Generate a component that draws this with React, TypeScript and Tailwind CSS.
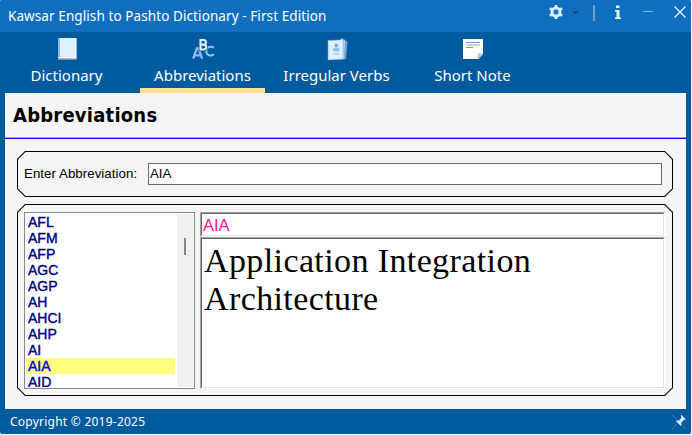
import type { ReactNode } from 'react';

const uiFont = "font-['Noto_Sans','Open_Sans',sans-serif]";

const abbreviations = ['AFL', 'AFM', 'AFP', 'AGC', 'AGP', 'AH', 'AHCI', 'AHP', 'AI', 'AIA', 'AID'];

function BookIcon() {
  return (
    <svg width="24" height="24" viewBox="0 0 24 24" className="ml-px block">
      <path d="M3 2h18.500v21.500H3z" fill="#8fb8e8" />
      <path d="M5 2h16.500v19H5z" fill="#dff0ff" />
      <path d="M3.500 21h18v1.200H4z" fill="#fff" />
      <path d="M3.500 22.200h18v1h-18z" fill="#9fb7d0" />
    </svg>
  );
}

function LettersIcon() {
  return (
    <svg width="24" height="24" viewBox="0 0 24 24" className="ml-px block" fill="none">
      <path d="M2.200 22.700 5.800 12.500h1.800l3.600 10.200M3.800 19.300h6" stroke="#85bdf5" strokeWidth="2.300" />
      <path d="M22.800 11.800c-1.600-1.500-5.800-1.500-6.900.8-.8 1.900-.6 4.700.9 6 1.800 1.200 4.500.9 6-.4" stroke="#93c5f7" strokeWidth="2" />
      <path d="M9.500 4v9.500h3.200c3.400 0 3.400-4.900.2-4.900 2.900-.2 2.700-4.600-.5-4.600zM9.500 8.600H13" stroke="#005a9e" strokeWidth="3.600" />
      <path d="M9.500 4v9.500h3.200c3.400 0 3.400-4.900.2-4.900 2.900-.2 2.700-4.600-.5-4.600zM9.500 8.600H13" stroke="#dff0ff" strokeWidth="2.100" />
    </svg>
  );
}

function AlbumIcon() {
  return (
    <svg width="24" height="24" viewBox="0 0 24 24" className="ml-px block">
      <path d="m18 4.500 4.500 1L21 23l-5 .8z" fill="#76aee5" />
      <path d="m16 3 4.700 1L19.500 23l-4 .8z" fill="#a9d2f7" stroke="#367fbd" strokeWidth=".5" />
      <path d="m3 4.500 11.500-.5L18 2.500l.2 20-3.700 1L3 24z" fill="#dff0ff" stroke="#7ba9d8" strokeWidth=".6" />
      <path d="M3 4.500h1.300V24H3z" fill="#b8dcfc" />
      <circle cx="11.300" cy="9.300" r="1.900" fill="#72afe8" />
      <path d="M8 15.500V13c0-2 6.500-2 6.500 0v2.500zM8.500 17.500h5.800v1H8.500z" fill="#8fc2f0" />
    </svg>
  );
}

function NoteIcon() {
  return (
    <svg width="24" height="24" viewBox="0 0 24 24" className="ml-px block">
      <path d="M2 3h20v15L17.500 23H2z" fill="#fff" />
      <path d="M17.500 23v-5H22z" fill="#b5d4ef" stroke="#78a7d2" strokeWidth=".7" />
      <path d="M5 6.500h14M5 11.500h7" stroke="#6b9fd6" />
      <path d="M5 9h14" stroke="#b5c9e8" strokeWidth="1.500" />
    </svg>
  );
}

function Tab({ icon, label, className, active }: { icon: ReactNode; label: ReactNode; className: string; active?: boolean }) {
  return (
    <div className={`flex h-[61px] flex-col items-center border-b-5 pt-1 ${active ? 'border-[#ffe08c]' : 'border-transparent'} ${className}`}>
      {icon}
      <div className="mt-[3px] h-6 text-[15px] leading-6 whitespace-nowrap">{label}</div>
    </div>
  );
}

function Panel({ className, children }: { className: string; children: ReactNode }) {
  return (
    <div className="bg-black p-px [clip-path:polygon(8px_0,calc(100%-8px)_0,100%_8px,100%_calc(100%-8px),calc(100%-8px)_100%,8px_100%,0_calc(100%-8px),0_8px)]">
      <div className={`bg-[#f4f4f4] [clip-path:polygon(7.5px_0,calc(100%-7.500px)_0,100%_7.500px,100%_calc(100%-7.500px),calc(100%-7.500px)_100%,7.500px_100%,0_calc(100%-7.500px),0_7.500px)] ${className}`}>
        {children}
      </div>
    </div>
  );
}

function Sunken({ className, children }: { className: string; children: ReactNode }) {
  return (
    <div className={`border border-t-[#a0a0a0] border-r-white border-b-white border-l-[#a0a0a0] ${className}`}>
      <div className="h-full overflow-hidden border border-t-[#696969] border-r-[#e3e3e3] border-b-[#e3e3e3] border-l-[#696969] bg-white">
        {children}
      </div>
    </div>
  );
}

export default function App() {
  return (
    <div className="h-[435px] w-[692px] bg-white">
      <div className={`flex h-[434px] w-[691px] flex-col overflow-hidden rounded-[2px] bg-[#005a9e] text-white ${uiFont}`}>
        <header className="flex h-8 shrink-0 justify-between bg-[#106ebe] pl-2">
          <h1 className="text-[13.500px] leading-[33px] tracking-[0.09px] whitespace-nowrap">Kawsar English to Pashto Dictionary - First Edition</h1>
          <svg width="150" height="32" viewBox="541 0 150 32" fill="none">
            <g transform="translate(556 12)">
              <path d="M0-7v14M-6.200-3.600 6.200 3.600M-6.200 3.600 6.200-3.600" stroke="#dceeff" strokeWidth="2.600" />
              <circle r="4" fill="#106ebe" stroke="#dceeff" strokeWidth="3" />
              <circle r="2.900" stroke="#8ec4f2" />
            </g>
            <path d="M573 11.500h5l-2.500 2.500z" fill="#303030" />
            <path d="M594 5v16" stroke="#8db5cf" strokeWidth="1.500" />
            <path d="M616 5.500h3.500V8H616zM615 10h4.500v7.500h1.500V19h-6v-1.500h1.500v-6H615z" fill="#e5f5ff" />
            <path d="M643 11.500h10" stroke="#79c4f5" />
            <path d="m674.500 6.500 11 11m0-11-11 11" stroke="#e8f4ff" strokeWidth="1.300" />
          </svg>
        </header>

        <nav className="flex h-[61px] shrink-0 pl-1">
          <Tab className="w-[125px]" icon={<BookIcon />} label="Dictionary" />
          <Tab className="ml-[11px] w-[125px]" icon={<LettersIcon />} label="Abbreviations" active />
          <Tab className="ml-1 w-[135px]" icon={<AlbumIcon />} label="Irregular Verbs" />
          <Tab className="ml-[18px] w-[101px]" icon={<NoteIcon />} label="Short Note" />
        </nav>

        <main className="mr-[5px] ml-[5px] h-[316px] shrink-0 bg-[#f4f4f4] text-black">
          <div className="h-[46px] border-b border-[#0000ff]">
            <h2 className="h-[45px] border-b border-[#a9a9a9] pl-2 font-['DejaVu_Sans_Condensed','DejaVu_Sans',sans-serif] text-[20px] leading-[45px] font-bold tracking-[0.22px]">Abbreviations</h2>
          </div>
          <div className="flex flex-col gap-[7px] pt-3 pr-[13px] pl-3">
            <Panel className="flex h-11 items-center pr-2.5 pl-1.5 font-['Liberation_Sans',sans-serif] text-[13.300px]">
              <label className="w-[124px] tracking-[0.04px] whitespace-nowrap">Enter Abbreviation:</label>
              <div className="h-[22px] flex-1 border border-[#696969] bg-white pl-px leading-[20px]">AIA</div>
            </Panel>
            <Panel className="flex h-[190px] pt-[7px] pr-[7px] pb-1.5 pl-1.5">
              <div className="flex h-[177px] w-[171px] border border-[#828790] bg-white p-px">
                <ul className="h-[173px] w-[152px] overflow-hidden pr-0.5 font-['Liberation_Sans',sans-serif] text-[14px] leading-4 text-[#000080]">
                  {abbreviations.map((item) => (
                    <li key={item} className={`h-4 pl-[2px] [-webkit-text-stroke:0.4px] ${item === 'AIA' ? 'bg-[#ffff80] text-[#0000e0]' : ''}`}>{item}</li>
                  ))}
                </ul>
                <div className="w-4 bg-[#f0f0f0] pt-6 pl-[7px]">
                  <div className="h-[17px] w-0.5 bg-[#858585]" />
                </div>
              </div>
              <div className="ml-[5px] flex flex-1 flex-col">
                <Sunken className="h-[25px]">
                  <div className="pl-px font-['Liberation_Sans',sans-serif] text-[16.500px] leading-[23px] text-[#ff1493]">AIA</div>
                </Sunken>
                <Sunken className="h-[152px]">
                  <div className="pt-[3px] pl-0.5 font-['Liberation_Serif',serif] text-[34px] leading-[38px] tracking-[0.39px]">
                    Application Integration<br />Architecture
                  </div>
                </Sunken>
              </div>
            </Panel>
          </div>
        </main>

        <footer className="flex h-[25px] shrink-0 items-center justify-between pr-1 pl-2.5 text-[12px]">
          <span className="tracking-[0.24px]">Copyright © 2019-2025</span>
          <svg width="16" height="16" viewBox="0 0 16 16" fill="none">
            <path d="M1 1l14 14M1 15 6 10" stroke="#5590c4" strokeWidth=".8" />
            <path d="m10 .5 5 5-2 .3-2.700 2.900-.3 3.500L4.500 6.700l3.500-.3L10.300 4z" fill="#d8edff" />
          </svg>
        </footer>
      </div>
    </div>
  );
}
